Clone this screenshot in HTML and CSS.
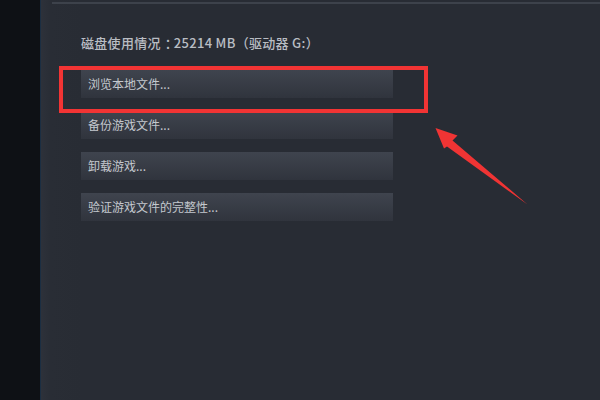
FILE: index.html
```html
<!DOCTYPE html>
<html lang="zh-CN">
<head>
<meta charset="utf-8">
<title>属性</title>
<link rel="stylesheet" href="styles.css">
</head>
<body>
<div class="window">
  <aside class="sidebar"></aside>
  <main class="main">
    <div class="topline"></div>
    <div class="content">
      <p class="usage">磁盘使用情况<span class="colon">：</span>25214 MB（驱动器 G:）</p>
      <div class="buttons">
        <div class="btn">浏览本地文件...</div>
        <div class="btn">备份游戏文件...</div>
        <div class="btn">卸载游戏...</div>
        <div class="btn">验证游戏文件的完整性...</div>
      </div>
    </div>
  </main>
  <div class="highlight"></div>
  <svg class="arrow" width="600" height="400" viewBox="0 0 600 400">
    <polygon points="435.5,128 457.5,135.5 452.5,140.5 527.5,204.5 447,146.5 444,148.5" fill="#f03434"/>
  </svg>
</div>
</body>
</html>
```
FILE: styles.css
```css
html, body {
  margin: 0;
  padding: 0;
  width: 600px;
  height: 400px;
  overflow: hidden;
  background: #282c34;
}
.window {
  position: relative;
  display: flex;
  width: 600px;
  height: 400px;
  font-family: "Noto Sans CJK SC", "Noto Sans", sans-serif;
}
.sidebar {
  width: 40px;
  flex: none;
  background: #0e1115;
  border-right: 1px solid #1b2e42;
}
.main {
  flex: 1;
  display: flex;
  flex-direction: column;
  background: linear-gradient(to right, #2d313a 0, #292d35 10px, #282c34 40px);
}
.topline {
  margin: 2px 0 0 11px;
  height: 2px;
  background: #3d424b;
}
.content {
  padding: 31px 0 0 40px;
}
.usage {
  margin: 0;
  font-size: 13px;
  line-height: 16px;
  font-weight: 500;
  letter-spacing: 0.3px;
  color: #b9bdc3;
}
.colon {
  padding-left: 4px;
  letter-spacing: -4px;
}
.buttons {
  margin-top: 19px;
  display: flex;
  flex-direction: column;
  gap: 13px;
  width: 312px;
}
.btn {
  height: 28px;
  line-height: 28px;
  padding-left: 7px;
  font-size: 12px;
  color: #c4c8ce;
  background: linear-gradient(to bottom, #3f444e 0%, #30343d 100%);
}
.highlight {
  position: absolute;
  left: 59px;
  top: 66px;
  width: 361px;
  height: 39px;
  border: 4px solid #f23434;
}
.arrow {
  position: absolute;
  left: 0;
  top: 0;
  pointer-events: none;
}
```
